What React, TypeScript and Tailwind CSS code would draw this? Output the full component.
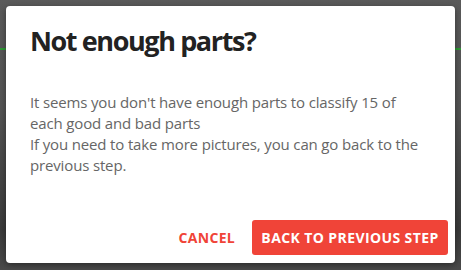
export default function App() {
  return (
    <div className="relative h-[270px] w-[461px] overflow-hidden bg-[linear-gradient(180deg,#5a5a5a_0%,#545454_40%,#3a3a3a_85%,#4a4a4a_100%)] font-['Open_Sans',sans-serif]">
      {/* backdrop line from the page behind */}
      <div className="absolute left-0 right-0 top-[48px] h-[2px] bg-[#2e9a35]" />

      <div className="relative ml-[6px] mt-[6px] flex h-[257px] w-[449px] flex-col rounded-[4px] bg-white pl-[24px] pr-[7px] shadow-[0_2px_6px_rgba(0,0,0,0.4)]">
        <h1 className="mt-[17px] text-[27px] font-bold leading-[36px] tracking-[-1.4px] text-[#222]">
          Not enough parts?
        </h1>

        <div className="mt-[33px] text-[15px] leading-[21px] tracking-[-0.15px] text-[#666]">
          <p>
            It seems you don't have enough parts to classify 15 of
            <br />
            each good and bad parts
          </p>
          <p>
            If you need to take more pictures, you can go back to the
            <br />
            previous step.
          </p>
        </div>

        <div className="mt-auto mb-[8px] flex items-center justify-end gap-[17px]">
          <button className="text-[14px] font-bold uppercase tracking-[0.3px] text-[#f04438]">
            Cancel
          </button>
          <button className="flex h-[35px] w-[196px] items-center justify-center rounded-[3px] bg-[#f04438] text-[14px] font-bold uppercase tracking-[0.4px] text-white">
            Back to previous step
          </button>
        </div>
      </div>
    </div>
  );
}
